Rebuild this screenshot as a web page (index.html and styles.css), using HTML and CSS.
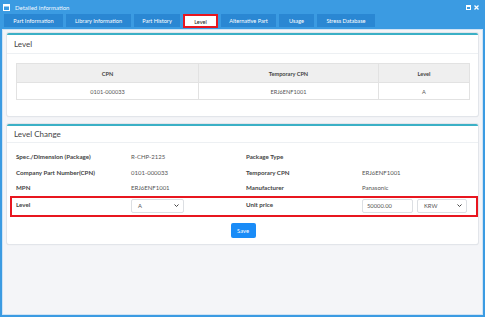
FILE: index.html
```html
<!DOCTYPE html>
<html>
<head>
<meta charset="utf-8">
<link rel="stylesheet" href="styles.css">
</head>
<body>
<div class="window">
  <div class="titlebar">
    <svg class="title-icon" width="7" height="7" viewBox="0 0 7 7"><rect x="0.5" y="0.5" width="6" height="6" fill="none" stroke="#fff" stroke-width="1"/><rect x="0.5" y="0.5" width="6" height="2" fill="#fff"/></svg>
    <span class="title">Detailed information</span>
    <span class="controls">
      <svg width="5" height="5" viewBox="0 0 5 5"><rect x="0.5" y="0.5" width="4" height="4" fill="none" stroke="#fff" stroke-width="1"/><rect x="0.5" y="0.5" width="4" height="1.5" fill="#fff"/></svg>
      <svg width="5" height="5" viewBox="0 0 5 5"><path d="M0.5 0.5L4.5 4.5M4.5 0.5L0.5 4.5" stroke="#fff" stroke-width="1.3"/></svg>
    </span>
  </div>
  <div class="tabs">
    <div class="tab t1">Part Information</div>
    <div class="tab t2">Library Information</div>
    <div class="tab t3">Part History</div>
    <div class="tab t4 active">Level</div>
    <div class="tab t5">Alternative Part</div>
    <div class="tab t6">Usage</div>
    <div class="tab t7">Stress Database</div>
  </div>
  <div class="content">
    <div class="card">
      <div class="card-header">Level</div>
      <div class="card-body">
        <table class="grid">
          <thead>
            <tr><th class="c1">CPN</th><th class="c2">Temporary CPN</th><th>Level</th></tr>
          </thead>
          <tbody>
            <tr><td>0101-000033</td><td>ERJ6ENF1001</td><td>A</td></tr>
          </tbody>
        </table>
      </div>
    </div>
    <div class="card card2">
      <div class="card-header">Level Change</div>
      <div class="card-body2">
        <div class="row">
          <div class="lbl">Spec./Dimension (Package)</div><div class="val">R-CHP-2125</div>
          <div class="lbl">Package Type</div><div class="val"></div>
        </div>
        <div class="row">
          <div class="lbl">Company Part Number(CPN)</div><div class="val">0101-000033</div>
          <div class="lbl">Temporary CPN</div><div class="val">ERJ6ENF1001</div>
        </div>
        <div class="row">
          <div class="lbl">MPN</div><div class="val">ERJ6ENF1001</div>
          <div class="lbl">Manufacturer</div><div class="val">Panasonic</div>
        </div>
        <div class="row hl">
          <div class="lbl">Level</div>
          <div class="val"><div class="select sel-level"><span>A</span><svg width="5" height="3" viewBox="0 0 5 3"><path d="M0.5 0.5L2.5 2.5L4.5 0.5" fill="none" stroke="#444" stroke-width="1"/></svg></div></div>
          <div class="lbl">Unit price</div>
          <div class="val price"><div class="input">50000.00</div><div class="select sel-cur"><span>KRW</span><svg width="5" height="3" viewBox="0 0 5 3"><path d="M0.5 0.5L2.5 2.5L4.5 0.5" fill="none" stroke="#444" stroke-width="1"/></svg></div></div>
        </div>
        <div class="actions"><button class="btn">Save</button></div>
      </div>
    </div>
  </div>
</div>
</body>
</html>
```
FILE: styles.css
```css
* { box-sizing: border-box; }
html, body { margin: 0; padding: 0; }
body { width: 485px; height: 317px; font-family: Lato, "Liberation Sans", sans-serif; background: #fff; overflow: hidden; }
.window { width: 485px; height: 317px; border: 2px solid #3b9be2; border-top: 0; background: #3b9be2; display: flex; flex-direction: column; }
.titlebar { height: 14px; display: flex; align-items: center; padding: 0 4px 0 1px; color: #fff; }
.title-icon { margin-right: 5px; }
.title { font-size: 6px; color: #f2f8ff; }
.controls { margin-left: auto; display: flex; gap: 3px; align-items: center; }
.tabs { height: 15px; display: flex; gap: 3px; padding-left: 2px; align-items: stretch; }
.tab { background: #2a87d3; color: #fff; font-size: 5.6px; display: flex; align-items: center; justify-content: center; height: 13px; }
.t1 { width: 59px; } .t2 { width: 65px; } .t3 { width: 46px; } .t4 { width: 35px; }
.t5 { width: 55px; } .t6 { width: 35px; } .t7 { width: 58px; }
.tab.active { background: #fff; color: #222; border: 2px solid #e8161f; height: 14px; }
.content { flex: 1; background: #f4f5f8; border: 1px solid #cfe3f5; padding: 3px 4px 0 4px; display: flex; flex-direction: column; }
.card { background: #fff; border-top: 2px solid #3bb0c6; border-radius: 2px; box-shadow: 0 0 0 1px #e2e5ea, 0 1px 1px #d4d8de; }
.card-header { height: 19px; display: flex; align-items: center; padding-left: 7px; font-size: 8px; color: #444; border-bottom: 1px solid #edf0f3; }
.card-body { padding: 9px 8px 16px 9px; }
.grid { width: 100%; border-collapse: collapse; font-size: 5.6px; color: #555; }
.grid th, .grid td { border: 1px solid #e2e2e2; text-align: center; }
.grid th { background: #efefef; height: 19px; font-weight: bold; color: #444; }
.grid td { height: 17px; }
.grid .c1 { width: 182px; } .grid .c2 { width: 180px; }
.card2 { margin-top: 8px; }
.card2 .card-header { height: 17px; }
.card-body2 { padding: 6px 8px 6px 9px; }
.row { display: grid; grid-template-columns: 115px 115px 116px 1fr; height: 15.5px; align-items: center; font-size: 6px; }
.lbl { font-weight: bold; color: #444; font-size: 6.2px; }
.val { color: #555; }
.row.hl { height: 21px; margin: 0 -8px 0 -6px; padding: 1px 6px 2px 4px; border: 2px solid #e8161f; align-items: start; }
.row.hl .lbl { padding-top: 2px; }
.select, .input { height: 14px; border: 1px solid #dcdfe3; border-radius: 2px; display: flex; align-items: center; padding: 0 4px 0 6px; color: #555; font-size: 5.8px; }
.select span { flex: 1; }
.sel-level { width: 53px; }
.price { display: flex; gap: 4px; }
.input { width: 51px; padding-left: 4px; }
.sel-cur { width: 50px; }
.actions { display: flex; justify-content: center; padding-top: 6px; }
.btn { width: 25px; height: 15px; background: #1a8cf7; border: 0; border-radius: 2px; color: #fff; font-family: Lato, sans-serif; font-size: 5.8px; padding: 0; }
```
